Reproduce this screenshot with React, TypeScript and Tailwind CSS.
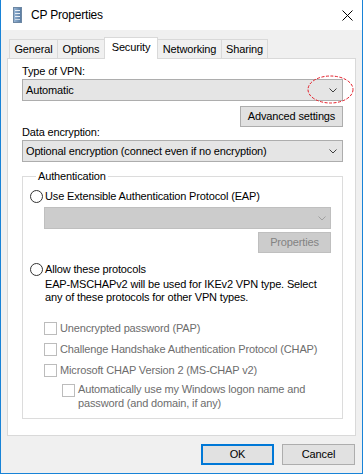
import React from 'react';

const Chevron: React.FC<{ color?: string }> = ({ color = '#404040' }) => (
  <svg width="8" height="5" viewBox="0 0 8 5" className="shrink-0">
    <polyline points="0.5,0.5 4,4 7.5,0.5" fill="none" stroke={color} strokeWidth="1" />
  </svg>
);

const Radio: React.FC<{ label: string }> = ({ label }) => (
  <div className="flex items-center h-[15px] leading-[15px]">
    <span className="w-[13px] h-[13px] rounded-full border border-[#333333] bg-white shrink-0" />
    <span className="ml-[2px]">{label}</span>
  </div>
);

const Check: React.FC<{ label: string }> = ({ label }) => (
  <div className="flex items-center h-[21px] leading-[15px] text-[#6d6d6d]">
    <span className="w-[13px] h-[13px] border border-[#bcbcbc] bg-white shrink-0" />
    <span className="ml-[3px]">{label}</span>
  </div>
);

const tabs = [
  { name: 'General', w: 'w-[49px]' },
  { name: 'Options', w: 'w-[48px]' },
  { name: 'Security', w: 'w-[54px]' },
  { name: 'Networking', w: 'w-[65px]' },
  { name: 'Sharing', w: 'w-[47px]' },
];

export default function App() {
  return (
    <div className="w-[363px] h-[474px] flex flex-col bg-[#f0f0f0] border-x border-b border-[#1883d7] text-[11px] tracking-[-0.15px] whitespace-nowrap text-black font-['Liberation_Sans',Arial,sans-serif] overflow-hidden">
      {/* title bar */}
      <div className="h-[30px] bg-white flex items-center shrink-0">
        <svg width="9" height="16" viewBox="0 0 9 16" className="ml-[12px]">
          <defs>
            <linearGradient id="ic" x1="0" y1="0" x2="1" y2="0">
              <stop offset="0" stopColor="#9ab8d8" />
              <stop offset="1" stopColor="#56799f" />
            </linearGradient>
          </defs>
          <rect x="0.5" y="0.5" width="8" height="15" fill="url(#ic)" stroke="#6d87a3" strokeWidth="1" />
          <line x1="2" y1="3.5" x2="7" y2="3.5" stroke="#e8eef5" />
          <line x1="2" y1="6.5" x2="7" y2="6.5" stroke="#e8eef5" />
          <line x1="2" y1="9.5" x2="7" y2="9.5" stroke="#e8eef5" />
          <line x1="2" y1="12.5" x2="7" y2="12.5" stroke="#c9d6e4" />
        </svg>
        <span className="ml-[9px] leading-[15px] text-[12px] tracking-[-0.2px]">CP Properties</span>
        <svg width="11" height="11" viewBox="0 0 11 11" className="ml-auto mr-[9px]">
          <path d="M0.5 0.5 L10.5 10.5 M10.5 0.5 L0.5 10.5" stroke="#000" strokeWidth="1" />
        </svg>
      </div>

      {/* body */}
      <div className="flex-1 flex flex-col px-[6px] pt-[7px]">
        {/* tabs */}
        <div className="h-[21px] flex items-end pl-[2px] relative z-10">
          {tabs.map((t, i) =>
            t.name === 'Security' ? (
              <div
                key={t.name}
                className={`${t.w} h-[22px] -mb-px -ml-px bg-white border border-b-0 border-[#d9d9d9] flex items-start justify-center pt-[2px] leading-[15px]`}
              >
                {t.name}
              </div>
            ) : (
              <div
                key={t.name}
                className={`${t.w} h-[19px] ${i > 0 ? '-ml-px' : ''} bg-[#f0f0f0] border border-b-0 border-[#d9d9d9] flex items-center justify-center leading-[15px]`}
              >
                {t.name}
              </div>
            )
          )}
        </div>

        {/* panel */}
        <div className="h-[378px] bg-white border border-[#d9d9d9] pl-[14px] pr-[12px] pt-[5px] flex flex-col">
          <div className="h-[15px] leading-[15px]">Type of VPN:</div>
          <div className="relative h-[22px] bg-[#e5e5e5] border border-[#adadad] flex items-center pl-[3px] pr-[5px] leading-[15px]">
            <span>Automatic</span>
            <span className="ml-auto"><Chevron /></span>
            <svg width="47" height="29" viewBox="0 0 47 29" className="absolute left-[284px] top-[-5px]">
              <ellipse cx="23.5" cy="14.5" rx="22.5" ry="13.5" fill="none" stroke="#e3202b" strokeWidth="1" strokeDasharray="3 1.5" />
            </svg>
          </div>
          <div className="flex justify-end mt-[5px]">
            <div className="w-[103px] h-[21px] bg-[#e1e1e1] border border-[#adadad] flex items-center justify-center leading-[15px]">
              Advanced settings
            </div>
          </div>
          <div className="h-[15px] leading-[15px] -mt-[2px]">Data encryption:</div>
          <div className="h-[22px] bg-[#e5e5e5] border border-[#adadad] flex items-center pl-[3px] pr-[5px] leading-[15px]">
            <span>Optional encryption (connect even if no encryption)</span>
            <span className="ml-auto"><Chevron /></span>
          </div>

          {/* authentication group */}
          <fieldset className="mt-[7px] h-[250px] border border-[#dcdcdc] pl-[7px] pr-[11px]">
            <legend className="ml-[6px] px-[2px] leading-[15px]">Authentication</legend>
            <div className="mt-[5px]">
              <Radio label="Use Extensible Authentication Protocol (EAP)" />
            </div>
            <div className="ml-[14px] mt-[3px] h-[22px] bg-[#cccccc] border border-[#bfbfbf] flex items-center justify-end pr-[4px]">
              <Chevron color="#a0a0a0" />
            </div>
            <div className="flex justify-end mt-[3px]">
              <div className="w-[73px] h-[21px] bg-[#cccccc] border border-[#bfbfbf] flex items-center justify-center text-[#838383] leading-[15px]">
                Properties
              </div>
            </div>
            <div className="mt-[9px]">
              <Radio label="Allow these protocols" />
            </div>
            <div className="ml-[15px] mt-[1px] leading-[13px]">
              EAP-MSCHAPv2 will be used for IKEv2 VPN type. Select
              <br />
              any of these protocols for other VPN types.
            </div>
            <div className="ml-[14px] mt-[14px] flex flex-col">
              <Check label="Unencrypted password (PAP)" />
              <Check label="Challenge Handshake Authentication Protocol (CHAP)" />
              <Check label="Microsoft CHAP Version 2 (MS-CHAP v2)" />
              <div className="flex items-start ml-[18px] mt-[1px] text-[#6d6d6d]">
                <span className="w-[13px] h-[13px] border border-[#bcbcbc] bg-white shrink-0 mt-[2px]" />
                <span className="ml-[3px] leading-[14px]">
                  Automatically use my Windows logon name and
                  <br />
                  password (and domain, if any)
                </span>
              </div>
            </div>
          </fieldset>
        </div>

        {/* buttons */}
        <div className="flex justify-end gap-[8px] mt-[8px] pr-[1px]">
          <div className="w-[73px] h-[21px] bg-[#e1e1e1] border-2 border-[#0078d7] flex items-center justify-center leading-[15px]">
            OK
          </div>
          <div className="w-[73px] h-[21px] bg-[#e1e1e1] border border-[#adadad] flex items-center justify-center leading-[15px]">
            Cancel
          </div>
        </div>
      </div>
    </div>
  );
}
